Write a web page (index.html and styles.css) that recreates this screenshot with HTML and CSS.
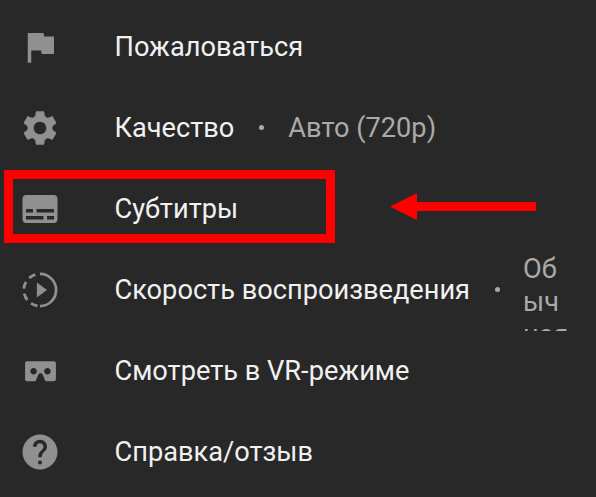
FILE: index.html
```html
<!DOCTYPE html>
<html lang="ru">

<head>
    <meta charset="UTF-8">
    <meta name="viewport" content="width=device-width, initial-scale=1.0">
    <title>Меню</title>
    <link rel="stylesheet" href="styles.css">
</head>

<body>

    <ul class="menu">
        <li class="menu-item">
            <svg class="icon" viewBox="0 0 24 24"><path d="M14.4 6L14 4H5v17h2v-7h5.6l.4 2h7V6z"/></svg>
            <span class="label">Пожаловаться</span>
        </li>
        <li class="menu-item">
            <svg class="icon" viewBox="0 0 24 24"><path d="M19.14 12.94c.04-.3.06-.61.06-.94 0-.32-.02-.64-.07-.94l2.03-1.58c.18-.14.23-.41.12-.61l-1.92-3.32c-.12-.22-.37-.29-.59-.22l-2.39.96c-.5-.38-1.03-.7-1.62-.94l-.36-2.54c-.04-.24-.24-.41-.48-.41h-3.84c-.24 0-.43.17-.47.41l-.36 2.54c-.59.24-1.13.57-1.62.94l-2.39-.96c-.22-.08-.47 0-.59.22L2.74 8.87c-.12.21-.08.47.12.61l2.03 1.58c-.05.3-.09.63-.09.94s.02.64.07.94l-2.03 1.58c-.18.14-.23.41-.12.61l1.92 3.32c.12.22.37.29.59.22l2.39-.96c.5.38 1.03.7 1.62.94l.36 2.54c.05.24.24.41.48.41h3.84c.24 0 .44-.17.47-.41l.36-2.54c.59-.24 1.13-.56 1.62-.94l2.39.96c.22.08.47 0 .59-.22l1.92-3.32c.12-.22.07-.47-.12-.61l-2.01-1.58zM12 15.6c-1.98 0-3.6-1.62-3.6-3.6s1.62-3.6 3.6-3.6 3.6 1.62 3.6 3.6-1.62 3.6-3.6 3.6z"/></svg>
            <span class="label">Качество</span>
            <span class="dot"></span>
            <span class="value">Авто (720p)</span>
        </li>
        <li class="menu-item">
            <svg class="icon" viewBox="0 0 24 24"><path d="M20 4H4c-1.1 0-2 .9-2 2v12c0 1.1.9 2 2 2h16c1.1 0 2-.9 2-2V6c0-1.1-.9-2-2-2zM4 12h4v2H4v-2zm10 6H4v-2h10v2zm6 0h-4v-2h4v2zm0-4H10v-2h10v2z"/></svg>
            <span class="label">Субтитры</span>
        </li>
        <li class="menu-item">
            <svg class="icon" viewBox="0 0 24 24">
                <path class="ring" d="M12 2.8A9.2 9.2 0 0 1 12 21.2"/>
                <path class="ring ring-dashed" d="M10.6 21.1A9.2 9.2 0 0 1 10.6 2.9"/>
                <polygon points="10.2,7.7 16,12 10.2,16.3"/>
            </svg>
            <span class="label">Скорость воспроизведения</span>
            <span class="dot"></span>
            <span class="value value-narrow">Обычная</span>
        </li>
        <li class="menu-item">
            <svg class="icon icon-vr" viewBox="0 0 24 24"><path d="M20.74 6H3.21C2.55 6 2 6.57 2 7.28v10.44c0 .7.55 1.28 1.23 1.28h4.79c.52 0 .96-.33 1.14-.79l1.4-3.48c.23-.59.79-1.01 1.44-1.01s1.21.42 1.45 1.01l1.39 3.48c.19.46.63.79 1.11.79h4.79c.71 0 1.26-.58 1.26-1.28V7.28c0-.71-.55-1.28-1.26-1.28zM7.5 14.62c-1.17 0-2.13-.95-2.13-2.12 0-1.17.96-2.13 2.13-2.13 1.18 0 2.12.96 2.12 2.13s-.95 2.12-2.12 2.12zm9 0c-1.17 0-2.13-.95-2.13-2.12 0-1.17.96-2.13 2.13-2.13s2.12.96 2.12 2.13-.95 2.12-2.12 2.12z"/></svg>
            <span class="label">Смотреть в VR-режиме</span>
        </li>
        <li class="menu-item">
            <svg class="icon" viewBox="0 0 24 24"><path d="M12 2C6.48 2 2 6.48 2 12s4.48 10 10 10 10-4.48 10-10S17.52 2 12 2zm1 17h-2v-2h2v2zm2.07-7.75l-.9.92C13.45 12.9 13 13.5 13 15h-2v-.5c0-1.1.45-2.1 1.17-2.83l1.24-1.26c.37-.36.59-.86.59-1.41 0-1.1-.9-2-2-2s-2 .9-2 2H8c0-2.21 1.79-4 4-4s4 1.79 4 4c0 .88-.36 1.68-.93 2.25z"/></svg>
            <span class="label">Справка/отзыв</span>
        </li>
    </ul>

    <!-- red annotation drawn over the menu -->
    <div class="highlight"></div>
    <svg class="arrow" viewBox="0 0 146 27"><polygon points="0,13.5 27,0 27,9 146,9 146,18 27,18 27,27"/></svg>

</body>

</html>
```

FILE: styles.css
```css
body {
    margin: 0;
    height: 497px;
    overflow: hidden;
    position: relative;
    background: #282828;
    font-family: 'Roboto', sans-serif;
}

.menu {
    margin: 0;
    padding: 6px 0 0 19px;
    list-style: none;
}

.menu-item {
    display: flex;
    align-items: center;
    height: 81px;
}

.icon {
    flex: 0 0 42px;
    width: 42px;
    height: 42px;
    margin-right: 53.5px;
    fill: #909090;
}

.icon-vr {
    flex-basis: 37px;
    width: 37px;
    height: 37px;
    margin-left: 3px;
    margin-right: 55.5px;
}

.ring {
    fill: none;
    stroke: #909090;
    stroke-width: 1.6;
}

.ring-dashed {
    stroke-dasharray: 4 2.9;
}

.label {
    flex: none;
    font-size: 27.2px;
    color: #f1f1f1;
}

.dot {
    flex: none;
    width: 5px;
    height: 5px;
    margin: 0 24px 0 25px;
    border-radius: 50%;
    background: #aaaaaa;
}

.value {
    font-size: 27.2px;
    color: #aaaaaa;
}

.value-narrow {
    width: 46px;
    height: 78px;
    margin-top: 5px;
    margin-left: -1px;
    line-height: 33px;
    overflow: hidden;
    overflow-wrap: anywhere;
}

.highlight {
    position: absolute;
    left: 4px;
    top: 170px;
    width: 313px;
    height: 55px;
    border: 9px solid #fe0000;
}

.arrow {
    position: absolute;
    left: 390px;
    top: 193px;
    width: 146px;
    height: 27px;
    fill: #fe0000;
}
```
